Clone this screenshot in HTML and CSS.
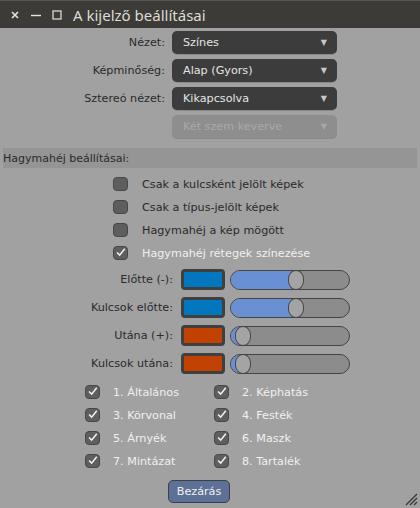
FILE: index.html
```html
<!DOCTYPE html>
<html lang="hu">
<head>
<meta charset="utf-8">
<link rel="stylesheet" href="styles.css">
</head>
<body>
<div class="window">
  <div class="titlebar">
    <span class="tb-btn"><svg width="10" height="10" viewBox="0 0 10 10"><path d="M2 2L8 8M8 2L2 8" stroke="#e8e6e0" stroke-width="1.6"/></svg></span>
    <span class="tb-btn"><svg width="12" height="10" viewBox="0 0 12 10"><path d="M1 5.5H11" stroke="#e8e6e0" stroke-width="1.4"/></svg></span>
    <span class="tb-btn"><svg width="10" height="10" viewBox="0 0 10 10"><rect x="1" y="1" width="8" height="8" fill="none" stroke="#e8e6e0" stroke-width="1.2"/></svg></span>
    <span class="tb-title">A kijelző beállításai</span>
  </div>

  <div class="selects">
    <label class="lbl">Nézet:</label>
    <div class="combo"><span>Színes</span><span class="arrow">▼</span></div>
    <label class="lbl">Képminőség:</label>
    <div class="combo"><span>Alap (Gyors)</span><span class="arrow">▼</span></div>
    <label class="lbl">Sztereó nézet:</label>
    <div class="combo"><span>Kikapcsolva</span><span class="arrow">▼</span></div>
    <span></span>
    <div class="combo disabled"><span>Két szem keverve</span><span class="arrow">▼</span></div>
  </div>

  <div class="section">Hagymahéj beállításai:</div>

  <div class="checks">
    <div class="check"><span class="box"></span><span>Csak a kulcsként jelölt képek</span></div>
    <div class="check"><span class="box"></span><span>Csak a típus-jelölt képek</span></div>
    <div class="check"><span class="box"></span><span>Hagymahéj a kép mögött</span></div>
    <div class="check on"><span class="box"><svg viewBox="0 0 14 14"><path d="M3 6.5L6 9.5L12 2" fill="none" stroke="#f2f2f2" stroke-width="1.8"/></svg></span><span>Hagymahéj rétegek színezése</span></div>
  </div>

  <div class="colors">
    <label class="lbl">Előtte (-):</label>
    <span class="swatch blue"></span>
    <div class="slider"><span class="fill" style="width:63px"></span><span class="knob" style="left:57px"></span></div>
    <label class="lbl">Kulcsok előtte:</label>
    <span class="swatch blue"></span>
    <div class="slider"><span class="fill" style="width:63px"></span><span class="knob" style="left:57px"></span></div>
    <label class="lbl">Utána (+):</label>
    <span class="swatch orange"></span>
    <div class="slider"><span class="fill" style="width:10px"></span><span class="knob" style="left:4px"></span></div>
    <label class="lbl">Kulcsok utána:</label>
    <span class="swatch orange"></span>
    <div class="slider"><span class="fill" style="width:10px"></span><span class="knob" style="left:4px"></span></div>
  </div>

  <div class="grid">
    <div class="check on"><span class="box"><svg viewBox="0 0 14 14"><path d="M3 6.5L6 9.5L12 2" fill="none" stroke="#f2f2f2" stroke-width="1.8"/></svg></span><span>1. Általános</span></div>
    <div class="check on"><span class="box"><svg viewBox="0 0 14 14"><path d="M3 6.5L6 9.5L12 2" fill="none" stroke="#f2f2f2" stroke-width="1.8"/></svg></span><span>2. Képhatás</span></div>
    <div class="check on"><span class="box"><svg viewBox="0 0 14 14"><path d="M3 6.5L6 9.5L12 2" fill="none" stroke="#f2f2f2" stroke-width="1.8"/></svg></span><span>3. Körvonal</span></div>
    <div class="check on"><span class="box"><svg viewBox="0 0 14 14"><path d="M3 6.5L6 9.5L12 2" fill="none" stroke="#f2f2f2" stroke-width="1.8"/></svg></span><span>4. Festék</span></div>
    <div class="check on"><span class="box"><svg viewBox="0 0 14 14"><path d="M3 6.5L6 9.5L12 2" fill="none" stroke="#f2f2f2" stroke-width="1.8"/></svg></span><span>5. Árnyék</span></div>
    <div class="check on"><span class="box"><svg viewBox="0 0 14 14"><path d="M3 6.5L6 9.5L12 2" fill="none" stroke="#f2f2f2" stroke-width="1.8"/></svg></span><span>6. Maszk</span></div>
    <div class="check on"><span class="box"><svg viewBox="0 0 14 14"><path d="M3 6.5L6 9.5L12 2" fill="none" stroke="#f2f2f2" stroke-width="1.8"/></svg></span><span>7. Mintázat</span></div>
    <div class="check on"><span class="box"><svg viewBox="0 0 14 14"><path d="M3 6.5L6 9.5L12 2" fill="none" stroke="#f2f2f2" stroke-width="1.8"/></svg></span><span>8. Tartalék</span></div>
  </div>

  <div class="footer">
    <button class="btn">Bezárás</button>
  </div>

  <svg class="grip" width="14" height="14" viewBox="0 0 14 14"><path d="M2 13L13 2M6 13L13 6M10 13L13 10" stroke="#3a3a3a" stroke-width="1.4"/></svg>
</div>
</body>
</html>
```

FILE: styles.css
```css
* { box-sizing: border-box; }
html, body { margin: 0; padding: 0; }
body {
  width: 420px;
  height: 508px;
  background: #a1a1a1;
  font-family: "DejaVu Sans", sans-serif;
  font-size: 11.2px;
  color: #2a2a2a;
  overflow: hidden;
}
.window {
  position: relative;
  width: 420px;
  height: 508px;
  background: #a1a1a1;
}
.titlebar {
  height: 28px;
  background: #3c3b37;
  border-top: 1px solid #55544f;
  display: flex;
  align-items: center;
  padding-left: 4px;
}
.tb-btn {
  width: 21px;
  display: flex;
  align-items: center;
  justify-content: center;
}
.tb-title {
  margin-left: 6px;
  font-family: "Noto Sans", "DejaVu Sans", sans-serif;
  font-size: 15px;
  color: #dfdbd2;
}
.lbl {
  text-align: right;
  align-self: center;
  white-space: nowrap;
}
.selects {
  display: grid;
  grid-template-columns: 165px 165px;
  column-gap: 7px;
  row-gap: 5px;
  margin-top: 3px;
}
.combo {
  height: 23px;
  background: #3c3c3c;
  border-radius: 5px;
  color: #e4e4e4;
  display: flex;
  align-items: center;
  justify-content: space-between;
  padding: 0 10px 0 11px;
  box-shadow: 0 1px 0 #8a8a8a;
}
.combo .arrow {
  font-size: 8px;
  color: #c8c8c8;
}
.combo.disabled {
  background: #8e8e8e;
  color: #a9a9a9;
}
.combo.disabled .arrow { color: #a6a6a6; }
.section {
  margin: 10px 3px 0 3px;
  height: 20px;
  background: #959595;
  display: flex;
  align-items: center;
  font-size: 11px;
}
.checks {
  display: flex;
  flex-direction: column;
  gap: 9px;
  padding-left: 113px;
  margin-top: 9px;
}
.check {
  display: flex;
  align-items: center;
  gap: 14px;
  height: 14px;
  white-space: nowrap;
}
.check.on { color: #f0f0f0; }
.box {
  width: 15px;
  height: 14px;
  border-radius: 4px;
  background: #5e5e5e;
  border: 1px solid #474747;
  display: block;
  flex: none;
}
.box svg { display: block; width: 13px; height: 12px; }
.colors {
  display: grid;
  grid-template-columns: 173px 44px 121px;
  column-gap: 6px;
  row-gap: 7px;
  margin-top: 9px;
}
.swatch {
  height: 21px;
  border: 3px solid #3f3f3f;
  border-radius: 4px;
  margin-left: 2px;
  width: 44px;
}
.swatch.blue { background: #0277bd; }
.swatch.orange { background: #c14200; }
.slider {
  position: relative;
  height: 20px;
  margin-top: 1px;
  margin-left: 1px;
  background: #8c8c8c;
  border: 1px solid #454545;
  border-radius: 10px;
  overflow: hidden;
}
.slider .fill {
  position: absolute;
  left: 0; top: 0; bottom: 0;
  background: #6890d2;
}
.slider .knob {
  position: absolute;
  top: -1px;
  bottom: -1px;
  width: 16px;
  background: #a4a4a4;
  border: 1px solid #454545;
  border-radius: 8px / 9px;
}
.grid {
  display: grid;
  grid-template-columns: 129px 140px;
  row-gap: 9px;
  padding-left: 85px;
  margin-top: 11px;
}
.grid .check { gap: 13px; }
.footer {
  display: flex;
  padding-left: 168px;
  margin-top: 12px;
}
.btn {
  width: 62px;
  height: 23px;
  background: #5d7197;
  border: 1px solid #3a3f4a;
  border-radius: 5px;
  color: #f0f0f0;
  font-family: "DejaVu Sans", sans-serif;
  font-size: 11.2px;
  padding: 0;
}
.grip {
  position: absolute;
  right: 2px;
  bottom: 2px;
}
```
